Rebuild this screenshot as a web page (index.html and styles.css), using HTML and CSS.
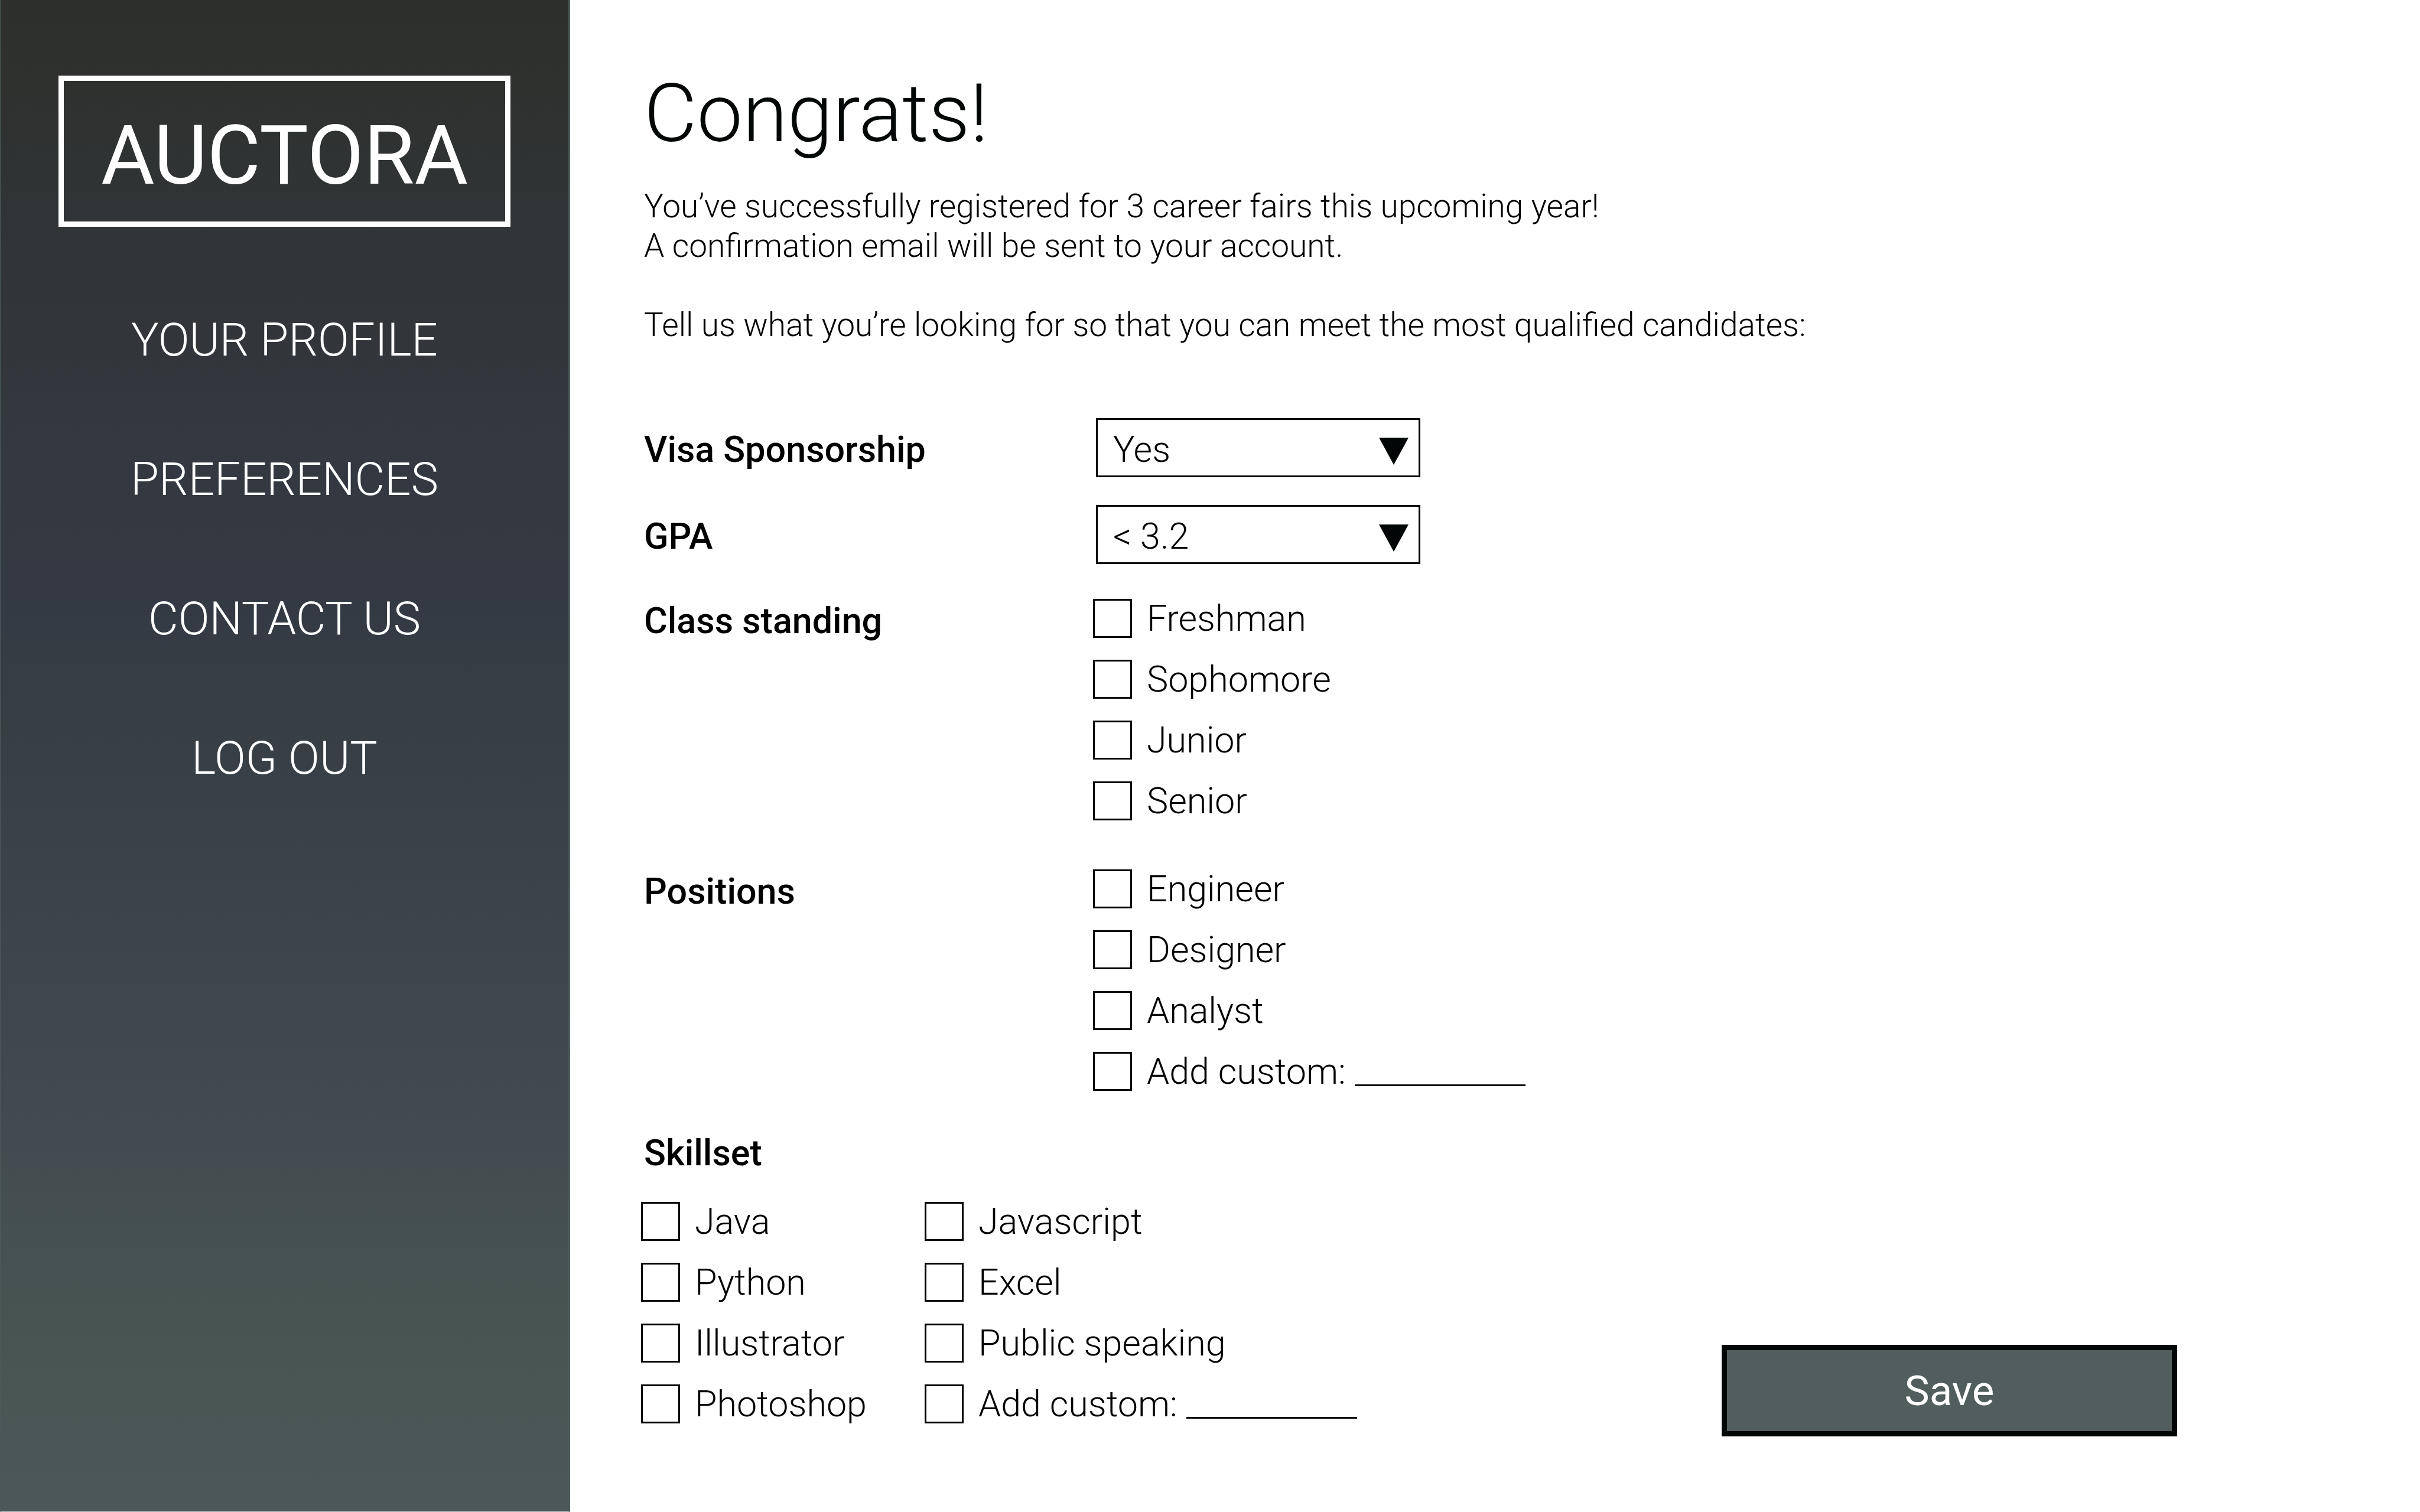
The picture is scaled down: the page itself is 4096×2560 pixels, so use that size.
FILE: index.html
```html
<!DOCTYPE html>
<html lang="en">
<head>
<meta charset="utf-8">
<title>Auctora – Preferences</title>
<link rel="stylesheet" href="styles.css">
</head>
<body>
<div class="app">
  <aside class="sidebar">
    <div class="logo">AUCTORA</div>
    <nav class="nav">
      <a href="#profile">YOUR PROFILE</a>
      <a href="#preferences">PREFERENCES</a>
      <a href="#contact">CONTACT US</a>
      <a href="#logout">LOG OUT</a>
    </nav>
  </aside>
  <main class="main">
    <h1 class="title">Congrats!</h1>
    <p class="intro">You’ve successfully registered for 3 career fairs this upcoming year!<br>A confirmation email will be sent to your account.</p>
    <p class="intro">Tell us what you’re looking for so that you can meet the most qualified candidates:</p>
    <form class="form">
      <div class="row">
        <label class="heading" for="visa">Visa Sponsorship</label>
        <div class="select">
          <select id="visa"><option>Yes</option><option>No</option></select>
          <svg class="arrow" viewBox="0 0 50 46" aria-hidden="true"><path d="M0 0H50L25 46Z"/></svg>
        </div>
      </div>
      <div class="row">
        <label class="heading" for="gpa">GPA</label>
        <div class="select">
          <select id="gpa"><option>&lt; 3.2</option><option>&gt; 3.2</option></select>
          <svg class="arrow" viewBox="0 0 50 46" aria-hidden="true"><path d="M0 0H50L25 46Z"/></svg>
        </div>
      </div>
      <div class="row group" role="group" aria-labelledby="class-heading">
        <h2 class="heading" id="class-heading">Class standing</h2>
        <div class="options">
          <label class="option"><input type="checkbox">Freshman</label>
          <label class="option"><input type="checkbox">Sophomore</label>
          <label class="option"><input type="checkbox">Junior</label>
          <label class="option"><input type="checkbox">Senior</label>
        </div>
      </div>
      <div class="row group" role="group" aria-labelledby="positions-heading">
        <h2 class="heading" id="positions-heading">Positions</h2>
        <div class="options">
          <label class="option"><input type="checkbox">Engineer</label>
          <label class="option"><input type="checkbox">Designer</label>
          <label class="option"><input type="checkbox">Analyst</label>
          <div class="custom">
            <label class="option"><input type="checkbox">Add custom:</label>
            <input class="blank" type="text" aria-label="Custom position">
          </div>
        </div>
      </div>
      <div class="bottom">
        <div class="skillset" role="group" aria-labelledby="skills-heading">
          <h2 class="heading" id="skills-heading">Skillset</h2>
          <div class="skills">
            <div class="options">
              <label class="option"><input type="checkbox">Java</label>
              <label class="option"><input type="checkbox">Python</label>
              <label class="option"><input type="checkbox">Illustrator</label>
              <label class="option"><input type="checkbox">Photoshop</label>
            </div>
            <div class="options">
              <label class="option"><input type="checkbox">Javascript</label>
              <label class="option"><input type="checkbox">Excel</label>
              <label class="option"><input type="checkbox">Public speaking</label>
              <div class="custom">
                <label class="option"><input type="checkbox">Add custom:</label>
                <input class="blank" type="text" aria-label="Custom skill">
              </div>
            </div>
          </div>
        </div>
        <button class="save" type="button">Save</button>
      </div>
    </form>
  </main>
</div>
</body>
</html>
```
FILE: styles.css
```css
* {
  box-sizing: border-box;
}

body {
  margin: 0;
  background: #fff;
  color: #000;
  font-family: Roboto, sans-serif;
  font-weight: 300;
  font-size: 61px;
}

h1, h2, p {
  margin: 0;
}

.app {
  display: flex;
  min-height: 100vh;
}

/* Sidebar */
.sidebar {
  flex: none;
  width: 965px;
  padding: 128px 98px;
  border: solid #4b5b59;
  border-width: 0 3px 1px 1px;
  border-bottom-color: #c8d0ce;
  background: linear-gradient(#2d2f2c 0%, #2f312f 6%, #303436 14%, #343840 30%, #343a43 40%, #373f45 48%, #3e454d 64%, #434a52 75%, #454f50 80%, #4a5654 92%, #4c5759 100%);
}

.logo {
  height: 256px;
  border: 9px solid #fff;
  color: #fff;
  font-size: 139px;
  font-weight: 400;
  line-height: 254px;
  text-align: center;
}

.nav {
  display: flex;
  flex-direction: column;
  gap: 136px;
  margin-top: 142px;
}

.nav a {
  color: #fff;
  font-size: 78px;
  line-height: 100px;
  text-align: center;
  text-decoration: none;
}

/* Main column */
.main {
  flex: 1;
  padding: 110px 411px 0 125px;
}

.title {
  color: #020606;
  font-size: 138px;
  font-weight: 300;
  line-height: 164px;
}

.intro {
  margin-top: 42px;
  font-size: 55px;
  line-height: 67px;
}

.intro + .intro {
  margin-top: 67px;
}

.form {
  display: flex;
  flex-direction: column;
  margin-top: 124px;
}

.row {
  display: flex;
  align-items: center;
  margin-bottom: 47px;
}

.heading {
  flex: none;
  width: 765px;
  padding-top: 6px;
  font-size: 61px;
  font-weight: 500;
  line-height: 80px;
}

.select {
  position: relative;
  width: 549px;
}

.select select {
  display: block;
  width: 100%;
  height: 100px;
  padding: 6px 80px 0 26px;
  border: 3px solid #000;
  border-radius: 0;
  background: #fff;
  color: #000;
  appearance: none;
  font: inherit;
}

.arrow {
  position: absolute;
  top: 33px;
  right: 20px;
  width: 50px;
  height: 46px;
  fill: #020606;
  pointer-events: none;
}

.group {
  align-items: flex-start;
  margin-top: 5px;
  margin-bottom: 52px;
}

.group + .group {
  margin-top: 17px;
}

.group .heading {
  width: 760px;
  padding-top: 4px;
}

.options {
  display: flex;
  flex-direction: column;
  gap: 23px;
}

.option {
  display: flex;
  align-items: center;
  gap: 25px;
  line-height: 80px;
}

.option input {
  flex: none;
  width: 66px;
  height: 66px;
  margin: 0;
  border: 3px solid #000;
  background: #fff;
  appearance: none;
}

.custom {
  display: flex;
  align-items: flex-start;
  gap: 15px;
}

.blank {
  width: 289px;
  height: 65px;
  padding: 0;
  border: 0;
  border-bottom: 3px solid #000;
  background: none;
  font: inherit;
}

.bottom {
  display: flex;
  align-items: flex-end;
  justify-content: space-between;
}

.skillset {
  margin-bottom: 15px;
}

.skills {
  display: grid;
  grid-template-columns: 480px auto;
  margin: 36px 0 0 -5px;
}

.save {
  width: 771px;
  height: 155px;
  border: 9px solid #020606;
  background: #525e5d;
  color: #fff;
  font-family: inherit;
  font-size: 71px;
  font-weight: 400;
}
```
